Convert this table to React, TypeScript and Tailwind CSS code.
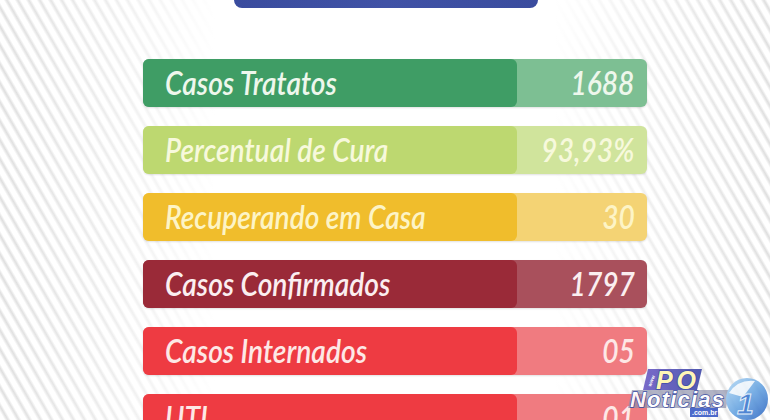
const rows = [
  { label: 'Casos Tratatos', value: '1688', dark: 'bg-[#3f9d65]', light: 'bg-[#7dbf93]', text: 'text-[#eef7ec]' },
  { label: 'Percentual de Cura', value: '93,93%', dark: 'bg-[#bdd870]', light: 'bg-[#d0e49c]', text: 'text-[#f7f9dc]' },
  { label: 'Recuperando em Casa', value: '30', dark: 'bg-[#f0bd2c]', light: 'bg-[#f4d374]', text: 'text-[#fdf4c6]' },
  { label: 'Casos Confirmados', value: '1797', dark: 'bg-[#9a2a38]', light: 'bg-[#a9505c]', text: 'text-[#fbeef0]' },
  { label: 'Casos Internados', value: '05', dark: 'bg-[#ee3b42]', light: 'bg-[#f07b80]', text: 'text-[#fde8e6]' },
  { label: 'UTI', value: '01', dark: 'bg-[#ee3b42]', light: 'bg-[#f07b80]', text: 'text-[#fde8e6]' },
];

function Logo() {
  return (
    <svg width="152" height="54" viewBox="0 0 152 54" className="absolute left-[618px] top-[366px] opacity-90">
      <defs>
        <linearGradient id="po" x1="0" y1="0" x2="1" y2="0">
          <stop offset="0" stopColor="#6b5bc4" />
          <stop offset="1" stopColor="#3f48a8" />
        </linearGradient>
        <linearGradient id="ball" x1="0" y1="0" x2="1" y2="1">
          <stop offset="0" stopColor="#b9dcf6" />
          <stop offset="0.5" stopColor="#6aa6e2" />
          <stop offset="1" stopColor="#2f66c2" />
        </linearGradient>
      </defs>
      <polygon points="30,3 84,3 79,24 25,24" fill="url(#po)" />
      <text x="33" y="21" fontSize="5" fill="#fff" transform="rotate(-70 33 21)" fontFamily="Liberation Sans, sans-serif" fontWeight="700">www</text>
      <text x="38" y="23" fontSize="25" fontStyle="italic" fontWeight="900" fill="#fff6b0" stroke="#2c3a9e" strokeWidth="1.6" paintOrder="stroke" textLength="40" fontFamily="Liberation Sans, sans-serif">PO</text>
      <polygon points="14,24 112,24 108,42 10,42" fill="#8c8faa" opacity="0.75" />
      <text x="12" y="41" fontSize="22" fontStyle="italic" fontWeight="900" fill="#fff" stroke="#2a3c9c" strokeWidth="1.4" paintOrder="stroke" textLength="94" fontFamily="Liberation Sans, sans-serif">Noticias</text>
      <rect x="72" y="42" width="28" height="9" fill="#3b5bc6" />
      <text x="74" y="49" fontSize="7" fill="#fff" fontWeight="700" fontFamily="Liberation Sans, sans-serif">.com.br</text>
      <circle cx="129" cy="33" r="21" fill="url(#ball)" />
      <path d="M111 27 Q120 13 137 15 L125 31 Z" fill="#ffffff" opacity="0.85" />
      <text x="119" y="48" fontSize="30" fontStyle="italic" fontWeight="900" fill="#3d79cf" stroke="#e6f2fc" strokeWidth="1" fontFamily="Liberation Sans, sans-serif">1</text>
    </svg>
  );
}

export default function App() {
  return (
    <div className="relative h-[420px] w-[770px] overflow-hidden bg-white bg-[linear-gradient(to_right,rgba(255,255,255,0)_0%,rgba(255,255,255,0.4)_14%,#fff_28%,#fff_72%,rgba(255,255,255,0.4)_86%,rgba(255,255,255,0)_100%),repeating-linear-gradient(60deg,#ffffff_0px,#ffffff_4px,#e7e7e7_6px,#dfdfdf_7px,#ffffff_9.5px)] font-['Lato',sans-serif]">
      <div className="ml-[234px] h-2 w-[304px] rounded-b-lg bg-[linear-gradient(to_right,#3a4c9e,#4052a6,#3a4c9e)]" />
      <div className="ml-[143px] mt-[51px] flex w-[504px] flex-col gap-[19px]">
        {rows.map((r) => (
          <div key={r.label} className={`flex h-12 shrink-0 items-center rounded-md shadow-[0_1px_2px_rgba(0,0,0,0.12)] ${r.light}`}>
            <div className={`flex h-12 w-[374px] items-center rounded-md pl-[22px] ${r.dark}`}>
              <span className={`inline-block origin-left scale-x-[0.88] text-[32px] font-semibold italic leading-none ${r.text}`}>{r.label}</span>
            </div>
            <span className={`ml-auto inline-block origin-right scale-x-[0.88] pr-[14px] text-[32px] font-semibold italic leading-none ${r.text}`}>{r.value}</span>
          </div>
        ))}
      </div>
      <Logo />
    </div>
  );
}
